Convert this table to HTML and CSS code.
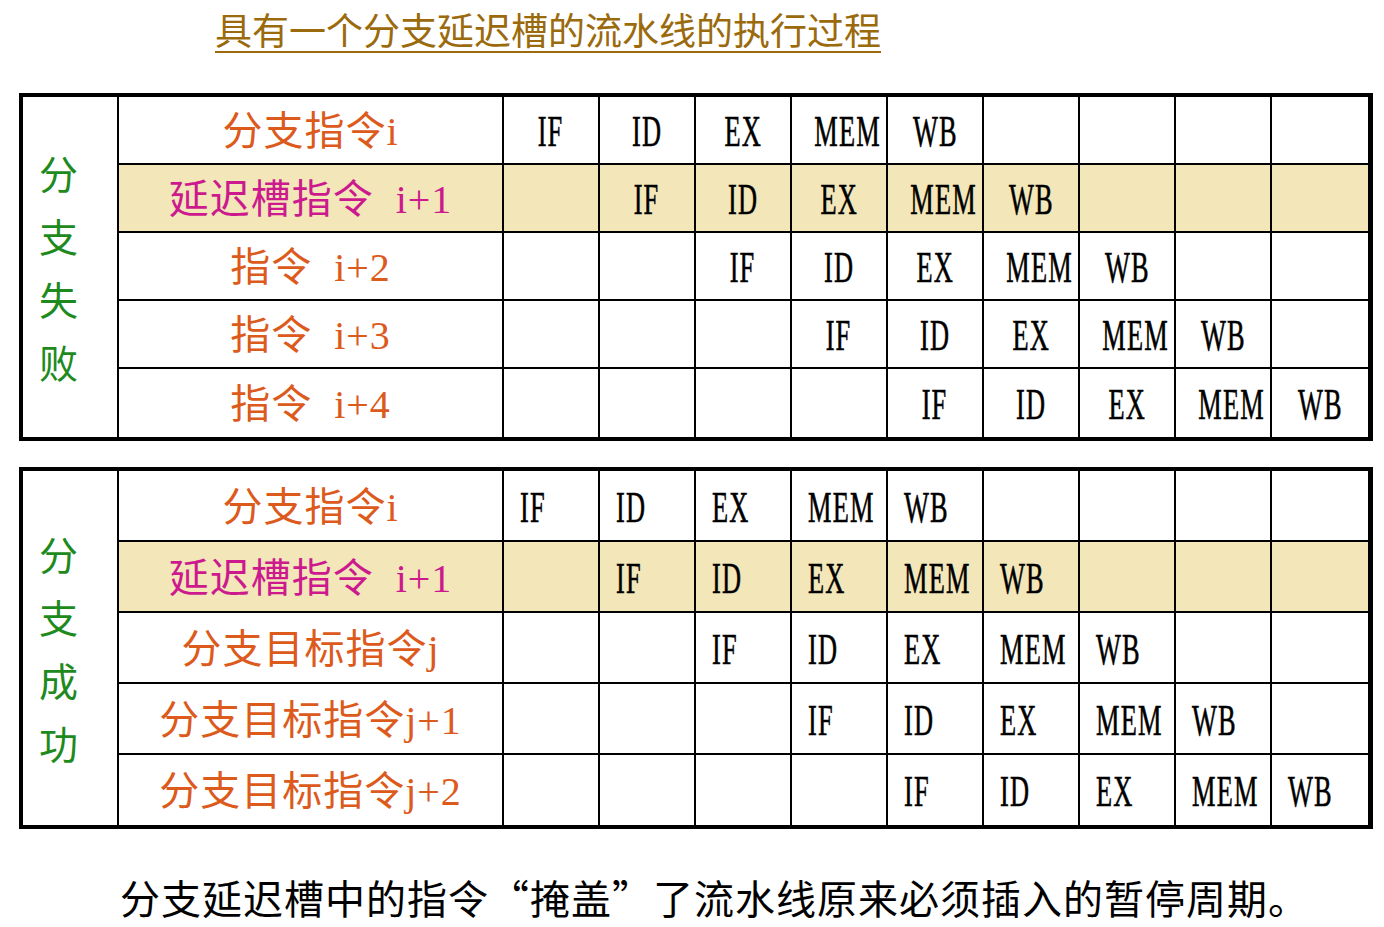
FILE: index.html
```html
<!DOCTYPE html>
<html lang="zh-CN">
<head>
<meta charset="utf-8">
<title>具有一个分支延迟槽的流水线的执行过程</title>
<link rel="stylesheet" href="styles.css">
</head>
<body>
<div class="page">
  <h1 class="title"><span class="title-text">具有一个分支延迟槽的流水线的执行过程</span></h1>

  <table class="pipe pipe-center pipe-fail">
    <colgroup><col class="c-side"><col class="c-name"><col span="9"></colgroup>
    <tr>
      <td class="side" rowspan="5"><div class="vert"><span>分</span><span>支</span><span>失</span><span>败</span></div></td>
      <td class="name orange"><span class="nm">分支指令i</span></td>
      <td><span class="st">IF</span></td><td><span class="st">ID</span></td><td><span class="st">EX</span></td><td><span class="st">MEM</span></td><td><span class="st">WB</span></td><td></td><td></td><td></td><td></td>
    </tr>
    <tr class="hl">
      <td class="name magenta"><span class="nm">延迟槽指令&nbsp; i+1</span></td>
      <td></td><td><span class="st">IF</span></td><td><span class="st">ID</span></td><td><span class="st">EX</span></td><td><span class="st">MEM</span></td><td><span class="st">WB</span></td><td></td><td></td><td></td>
    </tr>
    <tr>
      <td class="name orange"><span class="nm">指令&nbsp; i+2</span></td>
      <td></td><td></td><td><span class="st">IF</span></td><td><span class="st">ID</span></td><td><span class="st">EX</span></td><td><span class="st">MEM</span></td><td><span class="st">WB</span></td><td></td><td></td>
    </tr>
    <tr>
      <td class="name orange"><span class="nm">指令&nbsp; i+3</span></td>
      <td></td><td></td><td></td><td><span class="st">IF</span></td><td><span class="st">ID</span></td><td><span class="st">EX</span></td><td><span class="st">MEM</span></td><td><span class="st">WB</span></td><td></td>
    </tr>
    <tr>
      <td class="name orange"><span class="nm">指令&nbsp; i+4</span></td>
      <td></td><td></td><td></td><td></td><td><span class="st">IF</span></td><td><span class="st">ID</span></td><td><span class="st">EX</span></td><td><span class="st">MEM</span></td><td><span class="st">WB</span></td>
    </tr>
  </table>

  <table class="pipe pipe-left pipe-ok">
    <colgroup><col class="c-side"><col class="c-name"><col span="9"></colgroup>
    <tr>
      <td class="side" rowspan="5"><div class="vert"><span>分</span><span>支</span><span>成</span><span>功</span></div></td>
      <td class="name orange"><span class="nm">分支指令i</span></td>
      <td><span class="st">IF</span></td><td><span class="st">ID</span></td><td><span class="st">EX</span></td><td><span class="st">MEM</span></td><td><span class="st">WB</span></td><td></td><td></td><td></td><td></td>
    </tr>
    <tr class="hl">
      <td class="name magenta"><span class="nm">延迟槽指令&nbsp; i+1</span></td>
      <td></td><td><span class="st">IF</span></td><td><span class="st">ID</span></td><td><span class="st">EX</span></td><td><span class="st">MEM</span></td><td><span class="st">WB</span></td><td></td><td></td><td></td>
    </tr>
    <tr>
      <td class="name orange"><span class="nm">分支目标指令j</span></td>
      <td></td><td></td><td><span class="st">IF</span></td><td><span class="st">ID</span></td><td><span class="st">EX</span></td><td><span class="st">MEM</span></td><td><span class="st">WB</span></td><td></td><td></td>
    </tr>
    <tr>
      <td class="name orange"><span class="nm">分支目标指令j+1</span></td>
      <td></td><td></td><td></td><td><span class="st">IF</span></td><td><span class="st">ID</span></td><td><span class="st">EX</span></td><td><span class="st">MEM</span></td><td><span class="st">WB</span></td><td></td>
    </tr>
    <tr>
      <td class="name orange"><span class="nm">分支目标指令j+2</span></td>
      <td></td><td></td><td></td><td></td><td><span class="st">IF</span></td><td><span class="st">ID</span></td><td><span class="st">EX</span></td><td><span class="st">MEM</span></td><td><span class="st">WB</span></td>
    </tr>
  </table>

  <p class="note">分支延迟槽中的指令“掩盖”了流水线原来必须插入的暂停周期。</p>
</div>
</body>
</html>
```

FILE: styles.css
```css
html, body {
  margin: 0;
  padding: 0;
  background: #ffffff;
}

.page {
  width: 1384px;
  font-family: "Liberation Serif", "Noto Sans CJK SC", serif;
}

.title {
  margin: 0;
  height: 93px;
  box-sizing: border-box;
  padding: 9px 0 0 215px;
  font-family: "Noto Sans CJK SC", sans-serif;
  font-weight: normal;
  font-size: 37px;
  line-height: 40px;
  color: #9a6a0c;
}

.title-text {
  text-decoration: underline;
  text-decoration-thickness: 2px;
  text-underline-offset: 6px;
  text-decoration-color: #9a6a0c;
}

.pipe {
  margin-left: 19px;
  width: 1354px;
  table-layout: fixed;
  border-collapse: separate;
  border-spacing: 0;
  border: 4px solid #000;
  border-right-width: 5px;
}

.pipe-ok {
  margin-top: 26px;
}

.c-side {
  width: 96px;
}

.c-name {
  width: 385px;
}

.pipe td {
  padding: 0;
  border-right: 2px solid #000;
  border-bottom: 2px solid #000;
  vertical-align: middle;
}

.pipe td:last-child {
  border-right: none;
}

.pipe tr:last-child td,
.pipe td.side {
  border-bottom: none;
}

.pipe-fail td {
  height: 66px;
}

.pipe-fail tr:last-child td {
  height: 68px;
}

.pipe-ok td {
  height: 69px;
}

.pipe-ok tr:last-child td {
  height: 70px;
}

.hl td {
  background: #f3e7ba;
}

.side {
  background: #fff;
}

.pipe td.side {
  text-align: left;
}

.vert {
  display: flex;
  flex-direction: column;
  align-items: flex-start;
  padding-left: 16px;
  font-family: "Noto Sans CJK SC", sans-serif;
  font-size: 39px;
  line-height: 63px;
  color: #1e8a1e;
}

.name {
  text-align: center;
  font-size: 40px;
  line-height: 48px;
  letter-spacing: 1px;
  white-space: nowrap;
}

.nm {
  position: relative;
  top: 2px;
}

.orange {
  color: #dc5a1c;
}

.magenta {
  color: #cc1a8e;
}

.st {
  display: inline-block;
  font-family: "Liberation Serif", serif;
  font-size: 44px;
  line-height: 48px;
  letter-spacing: 2px;
  color: #000;
  -webkit-text-stroke: 0.6px #000;
  transform: scaleX(0.6);
  position: relative;
  top: 2px;
}

.pipe-center td {
  text-align: center;
}

.pipe-center .st {
  transform-origin: center;
}

.pipe-left td:not(.name) {
  text-align: left;
}

.pipe-left td:not(.name):not(.side) {
  padding-left: 16px;
}

.pipe-left .st {
  transform-origin: left center;
}

.note {
  margin: 44px 0 0 120px;
  font-family: "Noto Sans CJK SC", sans-serif;
  font-size: 40px;
  line-height: 48px;
  letter-spacing: 1px;
  color: #000;
  white-space: nowrap;
}
```
